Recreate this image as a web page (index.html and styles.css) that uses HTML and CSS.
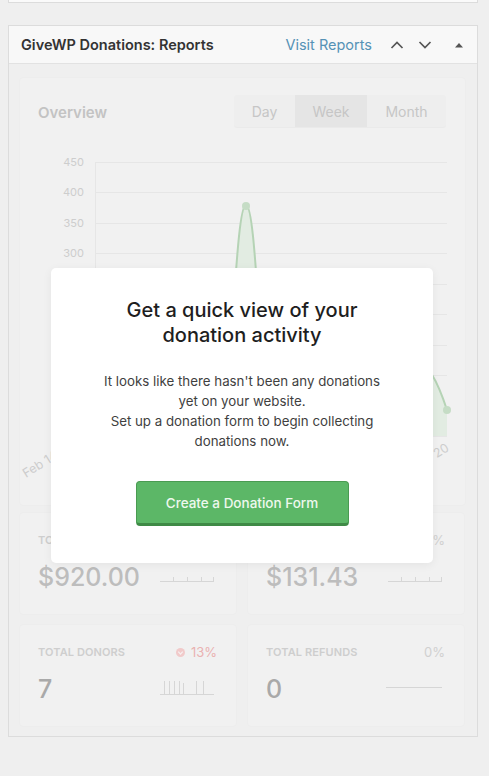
FILE: index.html
```html
<!DOCTYPE html>
<html>
<head>
<meta charset="utf-8">
<link rel="stylesheet" href="styles.css">
</head>
<body>
<div class="prev-box"></div>
<div class="widget">
  <div class="widget-header">
    <h2 class="widget-title">GiveWP Donations: Reports</h2>
    <div class="widget-actions">
      <a class="visit-link" href="#">Visit Reports</a>
      <svg class="icon chev" width="14" height="10" viewBox="0 0 14 10"><path d="M1.5 8 L7 2.5 L12.5 8" fill="none" stroke="#555" stroke-width="1.7"/></svg>
      <svg class="icon chev" width="14" height="10" viewBox="0 0 14 10"><path d="M1.5 2 L7 7.5 L12.5 2" fill="none" stroke="#555" stroke-width="1.7"/></svg>
      <svg class="icon tri" width="8" height="6" viewBox="0 0 8 6"><path d="M0 5.5 L4 1 L8 5.5 Z" fill="#555"/></svg>
    </div>
  </div>
  <div class="widget-body">
    <div class="chart-card">
      <div class="chart-head">
        <span class="chart-title">Overview</span>
        <div class="tabs">
          <span class="tab tab-day">Day</span>
          <span class="tab tab-week active">Week</span>
          <span class="tab tab-month">Month</span>
        </div>
      </div>
      <svg class="chart" width="445" height="365" viewBox="0 0 445 365">
        <g stroke="#e6e6e6" stroke-width="1">
          <line x1="75" y1="22.5" x2="427" y2="22.5"/>
          <line x1="75" y1="52.5" x2="427" y2="52.5"/>
          <line x1="75" y1="83.5" x2="427" y2="83.5"/>
          <line x1="75" y1="113.5" x2="427" y2="113.5"/>
          <line x1="75" y1="144.5" x2="427" y2="144.5"/>
          <line x1="75" y1="174.5" x2="427" y2="174.5"/>
          <line x1="75" y1="205.5" x2="427" y2="205.5"/>
          <line x1="75" y1="235.5" x2="427" y2="235.5"/>
          <line x1="75" y1="266.5" x2="427" y2="266.5"/>
          <line x1="75" y1="296.5" x2="427" y2="296.5"/>
          <line x1="75.5" y1="22" x2="75.5" y2="297"/>
        </g>
        <g class="axis-label" text-anchor="end">
          <text x="64" y="26">450</text>
          <text x="64" y="56">400</text>
          <text x="64" y="87">350</text>
          <text x="64" y="117">300</text>
          <text x="64" y="148">250</text>
          <text x="64" y="178">200</text>
          <text x="64" y="209">150</text>
          <text x="64" y="239">100</text>
          <text x="64" y="270">50</text>
          <text x="64" y="300">0</text>
        </g>
        <path d="M75 296 L196 296 C212 296 214 65 226 65 C238 65 240 296 256 296 L330 296 C372 296 388 150 427 270 L427 296 Z" fill="#e2ece2"/>
        <path d="M75 296 L196 296 C212 296 214 65 226 65 C238 65 240 296 256 296 L330 296 C372 296 388 150 427 270" fill="none" stroke="#b5d3b5" stroke-width="2"/>
        <circle cx="226" cy="66" r="4" fill="#c5dcc5"/>
        <circle cx="427" cy="270" r="4" fill="#c5dcc5"/>
        <text class="axis-label x-label" x="6" y="338" transform="rotate(-32 6 338)">Feb 14</text>
        <text class="axis-label x-label" x="430" y="310" text-anchor="end" transform="rotate(-32 430 310)">Feb 20</text>
      </svg>
    </div>
    <div class="stats">
      <div class="stat-card">
        <div class="stat-top"><span class="stat-label">Total Income</span><span class="stat-change">13%</span></div>
        <div class="stat-bottom"><span class="stat-value">$920.00</span>
          <svg class="spark" width="54" height="14" viewBox="0 0 54 14"><path d="M0 11.5 H54 M13.5 11.5 V7 M27.5 11.5 V7 M41.5 11.5 V7 M53.5 11.5 V7" stroke="#d6d6d6" stroke-width="1" fill="none"/></svg>
        </div>
      </div>
      <div class="stat-card">
        <div class="stat-top"><span class="stat-label">Avg. Donation</span><span class="stat-change">5%</span></div>
        <div class="stat-bottom"><span class="stat-value">$131.43</span>
          <svg class="spark" width="54" height="14" viewBox="0 0 54 14"><path d="M0 11.5 H54 M13.5 11.5 V7 M27.5 11.5 V7 M41.5 11.5 V7 M53.5 11.5 V7" stroke="#d6d6d6" stroke-width="1" fill="none"/></svg>
        </div>
      </div>
      <div class="stat-card">
        <div class="stat-top"><span class="stat-label">Total Donors</span>
          <span class="stat-change down"><svg width="9" height="9" viewBox="0 0 10 10"><circle cx="5" cy="5" r="5" fill="#f1caca"/><path d="M2.5 4 L5 6.8 L7.5 4" fill="none" stroke="#f6f0f0" stroke-width="1.4"/></svg>13%</span></div>
        <div class="stat-bottom"><span class="stat-value dark">7</span>
          <svg class="spark bars" width="54" height="22" viewBox="0 0 54 22"><path d="M0 20.5 H54 M4.5 20.5 V7 M9.5 20.5 V7 M14.5 20.5 V7 M19.5 20.5 V7 M23.5 20.5 V9 M36.5 20.5 V7 M43.5 20.5 V7" stroke="#d6d6d6" stroke-width="1" fill="none"/></svg>
        </div>
      </div>
      <div class="stat-card">
        <div class="stat-top"><span class="stat-label">Total Refunds</span><span class="stat-change">0%</span></div>
        <div class="stat-bottom"><span class="stat-value dark">0</span>
          <svg class="spark" width="56" height="14" viewBox="0 0 56 14"><path d="M0 5.5 H56" stroke="#d6d6d6" stroke-width="1" fill="none"/></svg>
        </div>
      </div>
    </div>

    <div class="modal">
      <h3 class="modal-title">Get a quick view of your donation activity</h3>
      <p class="modal-text">It looks like there hasn't been any donations yet on your website.<br>Set up a donation form to begin collecting donations now.</p>
      <a class="modal-button" href="#">Create a Donation Form</a>
    </div>
  </div>
</div>
</body>
</html>
```
FILE: styles.css
```css
* { box-sizing: border-box; }
html, body { margin: 0; padding: 0; }
body {
  background: #efefef;
  font-family: Inter, "Liberation Sans", sans-serif;
  width: 489px;
  height: 776px;
  overflow: hidden;
}
.prev-box {
  margin-left: 8px;
  width: 470px;
  height: 3px;
  background: #fafafa;
  border: 1px solid #dcdcdc;
  border-top: none;
}
.widget {
  margin: 22px 0 0 8px;
  width: 470px;
  border: 1px solid #dcdcdc;
  background: #f7f7f7;
}
.widget-header {
  height: 38px;
  display: flex;
  align-items: center;
  justify-content: space-between;
  padding: 0 14px 0 12px;
  border-bottom: 1px solid #e2e2e2;
  background: #f8f8f8;
}
.widget-title {
  margin: 0;
  font-size: 14.5px;
  font-weight: 600;
  color: #333;
}
.widget-actions {
  display: flex;
  align-items: center;
}
.visit-link {
  color: #5592b6;
  text-decoration: none;
  font-size: 14.5px;
  margin-right: 18px;
}
.icon.chev { margin-right: 14px; }
.icon.chev + .icon.chev { margin-right: 23px; }
.widget-body {
  position: relative;
  background: #efefef;
  padding: 14px 12px 10px 11px;
}
.chart-card {
  background: #f1f1f1;
  border-radius: 3px;
  box-shadow: 0 0 2px rgba(0,0,0,0.04);
  height: 427px;
}
.chart-head {
  height: 62px;
  display: flex;
  align-items: flex-start;
  justify-content: space-between;
  padding: 17px 19px 0 18px;
}
.chart-title {
  font-size: 15px;
  font-weight: 600;
  color: #c3c3c3;
  margin-top: 8px;
}
.tabs {
  display: flex;
  height: 32px;
  border-radius: 3px;
  background: #eeeeee;
  box-shadow: 0 1px 1px rgba(0,0,0,0.03);
}
.tab {
  display: flex;
  align-items: center;
  justify-content: center;
  font-size: 14px;
  color: #c6c6c6;
}
.tab-day { width: 61px; }
.tab-week { width: 72px; }
.tab-month { width: 79px; }
.tab.active { background: #e5e5e5; }
.chart { display: block; }
.axis-label {
  font-size: 11px;
  fill: #cdcdcd;
  font-family: Inter, "Liberation Sans", sans-serif;
}
.axis-label.x-label { font-size: 12.5px; }
.stats {
  margin-top: 8px;
  display: grid;
  grid-template-columns: 216px 216px;
  column-gap: 12px;
  row-gap: 11px;
}
.stat-card {
  background: #f1f1f1;
  border-radius: 3px;
  box-shadow: 0 0 2px rgba(0,0,0,0.04);
  height: 101px;
  padding: 20px 19px 0 18px;
}
.stat-top {
  display: flex;
  justify-content: space-between;
  align-items: center;
  height: 14px;
}
.stat-label {
  font-size: 11px;
  font-weight: 600;
  text-transform: uppercase;
  color: #cecece;
  letter-spacing: 0.1px;
}
.stat-change {
  font-size: 13px;
  color: #d0d0d0;
  display: flex;
  align-items: center;
}
.stat-change.down { color: #eab2b2; }
.stat-change.down svg { margin-right: 6px; }
.stat-bottom {
  margin-top: 15px;
  display: flex;
  justify-content: space-between;
  align-items: center;
  height: 30px;
}
.stat-value {
  font-size: 25px;
  font-weight: 500;
  color: #bdbdbd;
}
.stat-value.dark { color: #a9a9a9; }
.spark { margin-right: 3px; }
.spark.bars { margin-top: -8px; }
.modal {
  position: absolute;
  left: 42px;
  top: 204px;
  width: 382px;
  height: 295px;
  background: #fff;
  border-radius: 5px;
  box-shadow: 0 2px 10px rgba(0,0,0,0.06);
  padding: 30px 30px 0;
  display: flex;
  flex-direction: column;
  align-items: center;
  text-align: center;
}
.modal-title {
  margin: 0;
  font-size: 20px;
  line-height: 25px;
  font-weight: 500;
  color: #1e1e1e;
  padding: 0 35px;
}
.modal-text {
  margin: 23px 0 0;
  max-width: 292px;
  font-size: 13.3px;
  line-height: 20px;
  color: #3f3f3f;
}
.modal-button {
  margin-top: 30px;
  width: 213px;
  height: 45px;
  display: flex;
  align-items: center;
  justify-content: center;
  background: #5cb767;
  border: 1px solid #4a9b52;
  border-bottom: 3px solid #3f8a46;
  border-radius: 4px;
  color: #eef8ee;
  font-size: 13.5px;
  font-weight: 500;
  text-decoration: none;
}
```
